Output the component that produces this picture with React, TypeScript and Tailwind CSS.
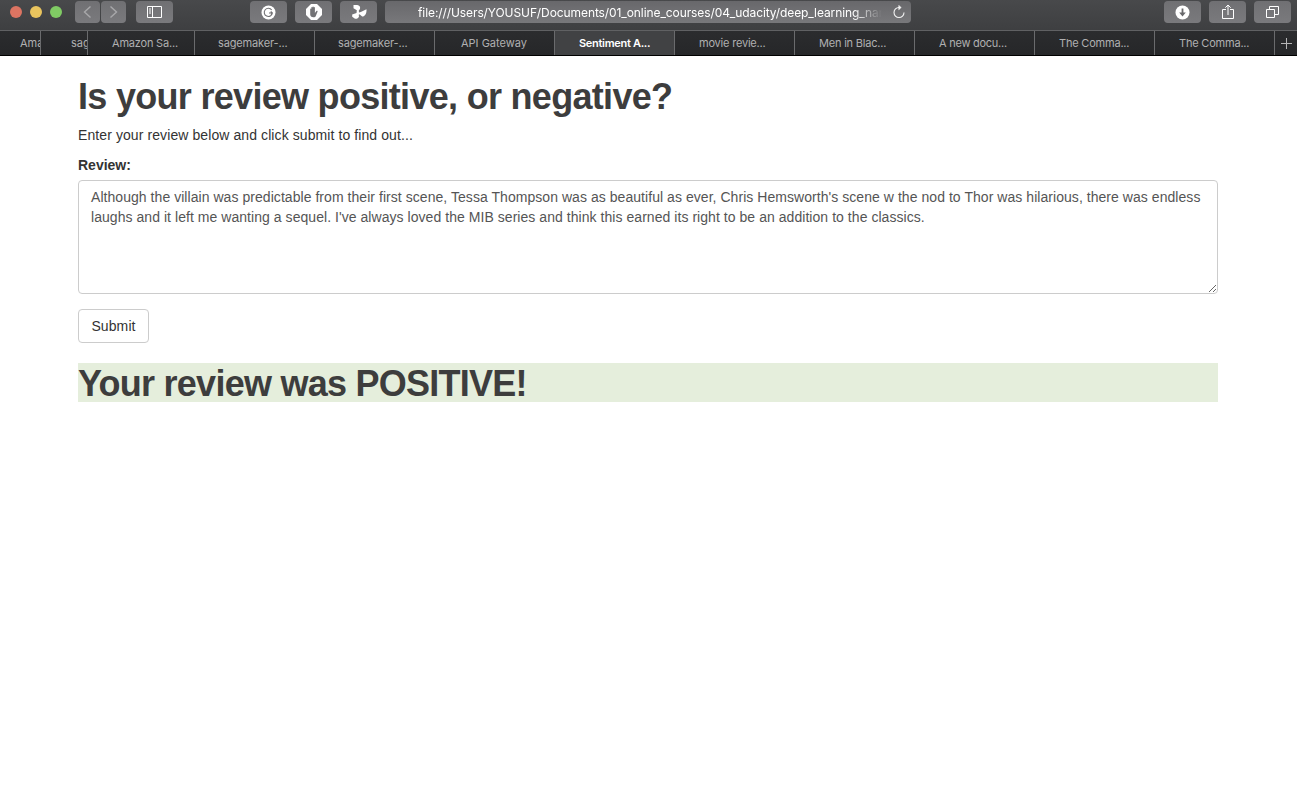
import type { ReactNode } from "react";

const tabs = [
  { label: "Ama", box: "w-[41px] pl-5", text: "tracking-[0px]" },
  { label: "sag", box: "w-[47px] pl-[30px]", text: "tracking-[0px]" },
  { label: "Amazon Sa...", box: "w-[107px] pl-6", text: "tracking-[-0.2px]" },
  { label: "sagemaker-...", box: "w-[120px] pl-[23px]", text: "tracking-[-0.15px]" },
  { label: "sagemaker-...", box: "w-[120px] pl-[23px]", text: "tracking-[-0.15px]" },
  { label: "API Gateway", box: "w-[120px] pl-[26px]", text: "tracking-[0px]" },
  { label: "Sentiment A...", box: "w-[120px] pl-6", text: "tracking-[-0.3px]", active: true },
  { label: "movie revie...", box: "w-[120px] pl-6", text: "tracking-[-0.2px]" },
  { label: "Men in Blac...", box: "w-[120px] pl-6", text: "tracking-[-0.2px]" },
  { label: "A new docu...", box: "w-[120px] pl-6", text: "tracking-[-0.25px]" },
  { label: "The Comma...", box: "w-[120px] pl-6", text: "tracking-[-0.2px]" },
  { label: "The Comma...", box: "w-[120px] pl-6", text: "tracking-[-0.2px]" },
];

function ToolButton({ className, children }: { className: string; children?: ReactNode }) {
  return (
    <button
      className={`flex h-[22px] shrink-0 items-center justify-center rounded bg-gradient-to-b from-[#707073] to-[#7a7a7d] ${className}`}
    >
      {children}
    </button>
  );
}

function Toolbar() {
  return (
    <div className="flex h-[30px] items-start bg-gradient-to-b from-[#48494b] to-[#3e3f41] pt-px">
      <div className="ml-[10px] mt-[5px] flex gap-2">
        <span className="size-3 rounded-full bg-[#dc7462]" />
        <span className="size-3 rounded-full bg-[#e9c45e]" />
        <span className="size-3 rounded-full bg-[#80cb64]" />
      </div>
      <ToolButton className="ml-[13px] w-[25px]">
        <svg width="9" height="14" viewBox="0 0 9 14" fill="none" stroke="#a8a8aa" strokeWidth="1.4">
          <path d="M7.5 1.5 1.5 7l6 5.5" />
        </svg>
      </ToolButton>
      <ToolButton className="ml-px w-[25px]">
        <svg width="9" height="14" viewBox="0 0 9 14" fill="none" stroke="#a8a8aa" strokeWidth="1.4">
          <path d="m1.5 1.5 6 5.5-6 5.5" />
        </svg>
      </ToolButton>
      <ToolButton className="ml-[10px] w-[37px]">
        <svg width="15" height="12" viewBox="0 0 15 12" fill="none" stroke="#fff">
          <path d="M.5.5h14v11H.5zM5.5.5v11M2 3h2M2 5h2M2 7h2" />
        </svg>
      </ToolButton>
      <ToolButton className="ml-[77px] w-[37px]">
        <svg width="15" height="15" viewBox="0 0 15 15" fill="none">
          <circle cx="7.5" cy="7.5" r="7" fill="#fff" />
          <path d="M10.7 5A4.1 4.1 0 1 0 11.4 8H8M9.7 6.5 11.4 8 10 9.8" stroke="#707073" strokeWidth="1.1" />
        </svg>
      </ToolButton>
      <ToolButton className="ml-2 w-[37px]">
        <svg width="16" height="16" viewBox="0 0 16 16">
          <path d="M5 0h6l5 5v6l-5 5H5l-5-5V5z" fill="#fff" />
          <path
            d="M4.2 9V5.2c0-.8 1.1-.8 1.1 0V3.7c0-.8 1.2-.8 1.2 0V3c0-.8 1.2-.8 1.2 0v.7c0-.8 1.2-.8 1.2 0V9l1.5-2c.6-.6 1.5-.1 1.1.7L10 11.5C9.5 13 8.7 13.3 7.4 13.3c-2 0-3.2-1.3-3.2-3z"
            fill="#737376"
          />
        </svg>
      </ToolButton>
      <ToolButton className="ml-2 w-[37px]">
        <svg width="16" height="16" viewBox="0 0 16 16" fill="#fff">
          <path d="M2.5 1H6.2C8.5 1.2 9.6 3 9 5L7.8 6.5 8 8.5 9.8 8 15.5 5.2C15.8 9.5 14 12.3 11.2 12.6L8.5 10.2 7.7 10.8 8 12.5C7.5 14.2 5.8 15 4 14.8L1.2 12.8V10.5L5.5 9 5.8 6.2 2.5 4.2z" />
        </svg>
      </ToolButton>
      <div className="ml-2 flex h-[22px] w-[526px] items-center rounded bg-gradient-to-b from-[#68686b] to-[#78787b] pl-[33px]">
        <div className="w-[464px] overflow-hidden whitespace-nowrap pt-px text-[12px] leading-[22px] tracking-[-0.09px] text-white [mask-image:linear-gradient(to_right,black_435px,transparent_464px)]">
          file:///Users/YOUSUF/Documents/01_online_courses/04_udacity/deep_learning_nano
        </div>
        <svg className="ml-[10px]" width="14" height="14" viewBox="0 0 14 14" fill="none" stroke="#f4f4f4" strokeWidth="1.1">
          <path d="M7.5 2.5H7a5 5 0 1 0 5 5" />
          <path d="M6.7.2 9.3 2.5 6.7 4.9z" fill="#f4f4f4" strokeWidth=".4" />
        </svg>
      </div>
      <ToolButton className="ml-[253px] w-[37px]">
        <svg width="15" height="15" viewBox="0 0 15 15">
          <circle cx="7.5" cy="7.5" r="7" fill="#fff" />
          <path d="M6.6 3.5h1.8v4h2.4l-3.3 4-3.3-4h2.4z" fill="#68686b" />
        </svg>
      </ToolButton>
      <ToolButton className="ml-2 w-[37px]">
        <svg width="12" height="16" viewBox="0 0 12 16" fill="none" stroke="#fff">
          <path d="M4 5.5H.5v9h11v-9H8M6 11V1M3.3 3.7 6 1l2.7 2.7" />
        </svg>
      </ToolButton>
      <ToolButton className="ml-2 w-[37px]">
        <svg width="13" height="12" viewBox="0 0 13 12" fill="none" stroke="#fff">
          <path d="M.5 3.5h8v8h-8zM3.5 3.5v-3h9v8h-4" />
        </svg>
      </ToolButton>
    </div>
  );
}

function TabBar() {
  return (
    <div className="flex h-[26px] border-b border-t border-b-black border-t-[#606163] bg-gradient-to-b from-[#2b2c2e] to-[#262729]">
      {tabs.map((tab, i) => (
        <div
          key={i}
          className={`shrink-0 overflow-hidden whitespace-nowrap border-r border-[#6a6b6d] text-[11px] leading-6 ${tab.box} ${tab.text} ${
            tab.active ? "bg-[#414244] font-semibold text-white" : "text-[#b0b0b1]"
          }`}
        >
          {tab.label}
        </div>
      ))}
      <div className="flex flex-1 items-center justify-center">
        <svg width="11" height="11" viewBox="0 0 11 11" stroke="#b5b5b6">
          <path d="M5.5 0v11M0 5.5h11" />
        </svg>
      </div>
    </div>
  );
}

export default function App() {
  return (
    <div className="min-h-[804px] w-[1297px] overflow-hidden bg-white">
      <header className="font-[Inter,sans-serif]">
        <Toolbar />
        <TabBar />
      </header>
      <main className="ml-[78px] w-[1140px] pt-[21px] font-['Liberation_Sans',Arial,sans-serif] text-sm leading-5 text-[#333]">
        <h1 className="whitespace-nowrap text-[36px] font-bold leading-[39px] tracking-[-0.7px] text-[#3d3d3d]">
          Is your review positive, or negative?
        </h1>
        <p className="mt-[9px] tracking-[0.09px]">Enter your review below and click submit to find out...</p>
        <label className="mt-[10px] block font-bold" htmlFor="review">
          Review:
        </label>
        <textarea
          id="review"
          className="mt-[5px] block h-[114px] w-full rounded border border-[#ccc] px-3 py-[6px] text-sm leading-5 tracking-[0.05px] text-[#555]"
          defaultValue={
            "Although the villain was predictable from their first scene, Tessa Thompson was as beautiful as ever, Chris Hemsworth's scene w the nod to Thor was hilarious, there was endless laughs and it left me wanting a sequel. I've always loved the MIB series and think this earned its right to be an addition to the classics."
          }
        />
        <button className="mt-[15px] h-[34px] w-[71px] rounded border border-[#ccc] bg-white text-sm tracking-[0.1px]">
          Submit
        </button>
        <h1 className="mt-5 h-[39px] whitespace-nowrap bg-[#e5eedc] text-[36px] font-bold leading-[41px] tracking-[-0.75px] text-[#3d3d3d]">
          Your review was POSITIVE!
        </h1>
      </main>
    </div>
  );
}
